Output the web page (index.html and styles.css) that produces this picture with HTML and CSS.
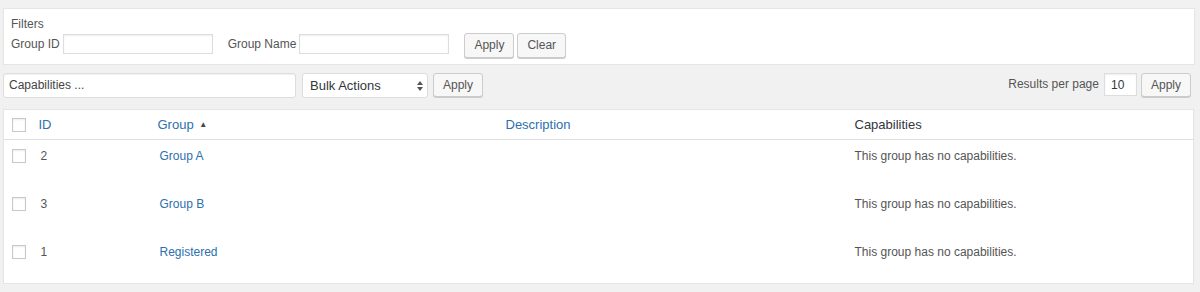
FILE: index.html
```html
<!DOCTYPE html>
<html lang="en">
<head>
    <meta charset="UTF-8">
    <meta name="viewport" content="width=device-width, initial-scale=1.0">
    <title>Groups</title>
    <link rel="stylesheet" href="styles.css">
</head>
<body>
    <div class="filters">
        <div class="filters-title">Filters</div>
        <div class="filters-row">
            <label class="field-label">Group ID</label>
            <input class="text-input" type="text">
            <label class="field-label spaced">Group Name</label>
            <input class="text-input" type="text">
            <div class="btn-pair">
                <button class="btn">Apply</button>
                <button class="btn">Clear</button>
            </div>
        </div>
    </div>

    <div class="tablenav">
        <div class="tablenav-left">
            <div class="caps-input">Capabilities ...</div>
            <div class="select-box">
                <span>Bulk Actions</span>
                <svg class="select-arrows" width="6" height="10" viewBox="0 0 6 10">
                    <path d="M3 0 L6 4 L0 4 Z" fill="#555"/>
                    <path d="M0 6 L6 6 L3 10 Z" fill="#555"/>
                </svg>
            </div>
            <button class="btn">Apply</button>
        </div>
        <div class="tablenav-right">
            <span class="per-page-label">Results per page</span>
            <input class="per-page-input" type="text" value="10">
            <button class="btn">Apply</button>
        </div>
    </div>

    <table class="groups-table">
        <colgroup>
            <col style="width: 27px">
            <col style="width: 119px">
            <col style="width: 348px">
            <col style="width: 349px">
            <col>
        </colgroup>
        <thead>
            <tr>
                <th class="cb-col"><span class="checkbox"></span></th>
                <th class="sortable">ID</th>
                <th class="sortable">Group <span class="sort-arrow">&#9650;</span></th>
                <th class="sortable">Description</th>
                <th class="plain">Capabilities</th>
            </tr>
        </thead>
        <tbody>
            <tr>
                <td class="cb-col"><span class="checkbox"></span></td>
                <td>2</td>
                <td><a href="#">Group A</a></td>
                <td></td>
                <td class="caps-cell">This group has no capabilities.</td>
            </tr>
            <tr>
                <td class="cb-col"><span class="checkbox"></span></td>
                <td>3</td>
                <td><a href="#">Group B</a></td>
                <td></td>
                <td class="caps-cell">This group has no capabilities.</td>
            </tr>
            <tr>
                <td class="cb-col"><span class="checkbox"></span></td>
                <td>1</td>
                <td><a href="#">Registered</a></td>
                <td></td>
                <td class="caps-cell">This group has no capabilities.</td>
            </tr>
        </tbody>
    </table>
</body>
</html>
```

FILE: styles.css
```css
body {
    margin: 0;
    padding: 8px 5px 0 3px;
    background-color: #f1f1f1;
    font-family: 'Liberation Sans', Arial, sans-serif;
    font-size: 12px;
    color: #555;
}

/* Filters box */
.filters {
    background-color: #fff;
    border: 1px solid #e5e5e5;
    padding: 7px 10px 6px 7px;
}

.filters-title {
    line-height: 16px;
    margin-bottom: 2px;
}

.filters-row {
    display: flex;
    align-items: flex-start;
    height: 24px;
}

.field-label {
    line-height: 20px;
    margin-right: 3px;
}

.field-label.spaced {
    margin-left: 15px;
}

.text-input {
    width: 150px;
    height: 20px;
    box-sizing: border-box;
    border: 1px solid #ddd;
    box-shadow: inset 0 1px 2px rgba(0,0,0,0.07);
    margin: 0;
    padding: 0 4px;
    font-family: inherit;
}

.btn-pair {
    display: flex;
    gap: 3px;
    margin-left: 15px;
    margin-top: -1px;
}

.btn {
    height: 25px;
    box-sizing: border-box;
    padding: 0 9px;
    background-color: #f7f7f7;
    border: 1px solid #ccc;
    border-radius: 3px;
    box-shadow: 0 1px 0 #ccc;
    color: #555;
    font-family: inherit;
    font-size: 12px;
    line-height: 23px;
    cursor: pointer;
}

/* Table navigation */
.tablenav {
    display: flex;
    justify-content: space-between;
    align-items: flex-start;
    margin: 8px 0 11px;
}

.tablenav-left {
    display: flex;
    align-items: flex-start;
}

.caps-input {
    width: 293px;
    height: 25px;
    box-sizing: border-box;
    background-color: #fff;
    border: 1px solid #ddd;
    border-radius: 3px;
    box-shadow: inset 0 1px 1px rgba(0,0,0,0.06);
    padding: 0 5px;
    line-height: 23px;
    color: #444;
}

.select-box {
    width: 126px;
    height: 25px;
    box-sizing: border-box;
    margin-left: 6px;
    display: flex;
    justify-content: space-between;
    align-items: center;
    background-color: #fff;
    border: 1px solid #ddd;
    border-radius: 3px;
    padding: 0 4px 0 7px;
    font-size: 13px;
    color: #32373c;
}

.tablenav-left .btn {
    margin-left: 5px;
    height: 24px;
    line-height: 22px;
}

.tablenav-right {
    display: flex;
    align-items: flex-start;
    margin-right: 4px;
}

.per-page-label {
    line-height: 23px;
    margin-right: 5px;
}

.per-page-input {
    width: 33px;
    height: 23px;
    box-sizing: border-box;
    border: 1px solid #ddd;
    box-shadow: inset 0 1px 2px rgba(0,0,0,0.07);
    margin: 0 4px 0 0;
    padding: 0 6px;
    font-family: inherit;
    font-size: 12px;
    color: #32373c;
}

.tablenav-right .btn {
    height: 24px;
    line-height: 22px;
}

/* Groups table */
.groups-table {
    width: 1191px;
    table-layout: fixed;
    border-collapse: collapse;
    background-color: #fff;
    border: 1px solid #e5e5e5;
    box-shadow: 0 1px 1px rgba(0,0,0,0.04);
}

.groups-table th {
    height: 29px;
    padding: 0 8px;
    text-align: left;
    font-weight: normal;
    font-size: 13px;
    color: #2c70ad;
    border-bottom: 1px solid #e1e1e1;
    vertical-align: middle;
}

.groups-table th.plain {
    color: #32373c;
}

.groups-table td {
    height: 48px;
    box-sizing: border-box;
    padding: 7px 10px 0;
    line-height: 18px;
    vertical-align: top;
    color: #555;
}

.groups-table td.caps-cell {
    padding-left: 8px;
}

.groups-table a {
    color: #2c70ad;
    text-decoration: none;
}

.groups-table .cb-col {
    padding: 0 0 0 8px;
}

.groups-table td.cb-col {
    padding-top: 9px;
}

.checkbox {
    display: block;
    width: 14px;
    height: 14px;
    box-sizing: border-box;
    border: 1px solid #c8c8c8;
    box-shadow: inset 0 1px 2px rgba(0,0,0,0.08);
    background-color: #fff;
}

.sort-arrow {
    font-size: 8px;
    color: #444;
    vertical-align: 2px;
    margin-left: 2px;
}
```
